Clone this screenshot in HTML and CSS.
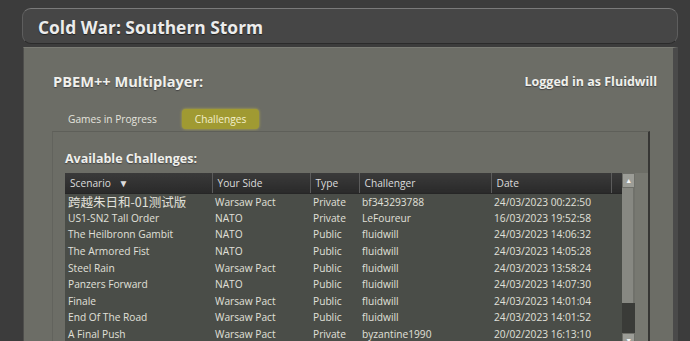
FILE: index.html
```html
<!DOCTYPE html>
<html lang="en">
<head>
    <meta charset="UTF-8">
    <title>Cold War: Southern Storm</title>
    <link rel="stylesheet" href="styles.css">
</head>
<body>
    <div class="app">
        <div class="titlebar">
            <h1>Cold War: Southern Storm</h1>
        </div>

        <div class="panel">
            <div class="panel-head">
                <h2>PBEM++ Multiplayer:</h2>
                <span class="login">Logged in as Fluidwill</span>
            </div>

            <div class="tabs">
                <span class="tab">Games in Progress</span>
                <span class="tab active">Challenges</span>
            </div>

            <div class="tab-body">
                <h3>Available Challenges:</h3>

                <div class="grid-wrap">
                    <table class="grid">
                        <colgroup>
                            <col class="c-scenario">
                            <col class="c-side">
                            <col class="c-type">
                            <col class="c-challenger">
                            <col class="c-date">
                            <col class="c-rest">
                        </colgroup>
                        <thead>
                            <tr>
                                <th>Scenario <span class="sort">&#9660;</span></th>
                                <th>Your Side</th>
                                <th>Type</th>
                                <th>Challenger</th>
                                <th>Date</th>
                                <th></th>
                            </tr>
                        </thead>
                        <tbody>
                            <tr><td class="cjk">跨越朱日和-01测试版</td><td>Warsaw Pact</td><td>Private</td><td>bf343293788</td><td>24/03/2023 00:22:50</td><td></td></tr>
                            <tr><td>US1-SN2 Tall Order</td><td>NATO</td><td>Private</td><td>LeFoureur</td><td>16/03/2023 19:52:58</td><td></td></tr>
                            <tr><td>The Heilbronn Gambit</td><td>NATO</td><td>Public</td><td>fluidwill</td><td>24/03/2023 14:06:32</td><td></td></tr>
                            <tr><td>The Armored Fist</td><td>NATO</td><td>Public</td><td>fluidwill</td><td>24/03/2023 14:05:28</td><td></td></tr>
                            <tr><td>Steel Rain</td><td>Warsaw Pact</td><td>Public</td><td>fluidwill</td><td>24/03/2023 13:58:24</td><td></td></tr>
                            <tr><td>Panzers Forward</td><td>NATO</td><td>Public</td><td>fluidwill</td><td>24/03/2023 14:07:30</td><td></td></tr>
                            <tr><td>Finale</td><td>Warsaw Pact</td><td>Public</td><td>fluidwill</td><td>24/03/2023 14:01:04</td><td></td></tr>
                            <tr><td>End Of The Road</td><td>Warsaw Pact</td><td>Public</td><td>fluidwill</td><td>24/03/2023 14:01:52</td><td></td></tr>
                            <tr><td>A Final Push</td><td>Warsaw Pact</td><td>Private</td><td>byzantine1990</td><td>20/02/2023 16:13:10</td><td></td></tr>
                        </tbody>
                    </table>

                    <div class="scrollbar">
                        <div class="scroll-btn">&#9650;</div>
                        <div class="scroll-thumb"></div>
                        <div class="scroll-track"></div>
                        <div class="scroll-btn">&#9660;</div>
                    </div>

                    <div class="gutter"></div>
                </div>
            </div>
        </div>
    </div>
</body>
</html>
```

FILE: styles.css
```css
* {
    margin: 0;
    padding: 0;
    box-sizing: border-box;
}

body {
    font-family: "Open Sans", "Noto Sans", sans-serif;
    background-color: #3c3c3c;
    color: #e2e2dc;
    height: 341px;
    overflow: hidden;
}

.app {
    display: flex;
    flex-direction: column;
    height: 341px;
    padding: 8px 12px 0 22px;
}

.titlebar {
    height: 36px;
    flex-shrink: 0;
    display: flex;
    align-items: center;
    padding: 2px 0 0 15px;
    background: #464646;
    border: 1px solid #5e5e5e;
    border-top-color: #7a7a7a;
    border-bottom-color: #2b2b2b;
    border-radius: 9px;
}

.titlebar h1 {
    font-size: 17.4px;
    font-weight: 700;
    color: #ececec;
    text-shadow: 0 1px 1px #222;
}

.panel {
    flex: 1;
    margin: 3px 0 0 1px;
    padding: 25px 16px 0 29px;
    background: #6c6d66;
    border-left: 1px solid #4e4e4c;
    border-right: 5px solid #4a4a4a;
    border-top: 1px solid #7b7c75;
    display: flex;
    flex-direction: column;
}

.panel-head {
    display: flex;
    justify-content: space-between;
    align-items: center;
    height: 16px;
}

.panel-head h2 {
    font-size: 14.6px;
    font-weight: 700;
    color: #f0f0ec;
    text-shadow: 0 1px 1px #444;
}

.login {
    font-size: 12.5px;
    font-weight: 700;
    color: #f0f0ec;
    text-shadow: 0 1px 1px #444;
}

.tabs {
    display: flex;
    gap: 12px;
    margin: 20px 0 0 2px;
}

.tab {
    height: 20px;
    line-height: 20px;
    padding: 0 13px;
    font-size: 10.2px;
    color: #e4e4de;
    border-radius: 4px;
}

.tab.active {
    background: #a09a32;
    color: #f4f0cc;
    box-shadow: 0 0 3px #b8b040;
}

.tab-body {
    flex: 1;
    margin: 2px 7px 0 -1px;
    padding: 19px 0 0 12px;
    border-top: 1px solid #5e5f59;
    border-left: 1px solid #62635d;
    border-right: 2px solid #363634;
}

.tab-body h3 {
    font-size: 12.5px;
    font-weight: 700;
    line-height: 16px;
    color: #f0f0ec;
    text-shadow: 0 1px 1px #444;
    margin-bottom: 6px;
}

.grid-wrap {
    display: flex;
    align-items: stretch;
    height: 175px;
}

.grid {
    width: 557px;
    table-layout: fixed;
    border-collapse: collapse;
    background: #4a4d48;
    font-size: 10.2px;
    align-self: flex-start;
}

.c-scenario { width: 147px; }
.c-side { width: 98px; }
.c-type { width: 49px; }
.c-challenger { width: 132px; }
.c-date { width: 120px; }
.c-rest { width: 11px; }

.grid th {
    height: 20px;
    padding: 0 5px;
    text-align: left;
    font-weight: 400;
    color: #dcdcdc;
    white-space: nowrap;
    background: linear-gradient(#3a3a3a, #2a2a2a);
    border-right: 1px solid #5c5c5c;
    border-bottom: 1px solid #262626;
}

.grid th:last-child {
    border-right: none;
}

.sort {
    font-size: 10px;
    margin-left: 5px;
}

.grid td {
    height: 16.6px;
    line-height: 14px;
    padding: 0 3px;
    white-space: nowrap;
    overflow: hidden;
    color: #e0e0da;
}

.grid td.cjk {
    font-family: "Noto Sans CJK SC", sans-serif;
    font-size: 12.5px;
    line-height: 14px;
}

.scrollbar {
    width: 14px;
    display: flex;
    flex-direction: column;
    background: #3a3b38;
}

.scroll-btn {
    height: 15px;
    flex-shrink: 0;
    background: #9c9d97;
    color: #f4f4f4;
    font-size: 7px;
    line-height: 13px;
    text-align: center;
    border: 1px solid #6e6f69;
}

.scroll-thumb {
    height: 115px;
    background: #878882;
    border-right: 2px solid #70716b;
}

.scroll-track {
    flex: 1;
}

.gutter {
    width: 13px;
    background: #777871;
}
```
